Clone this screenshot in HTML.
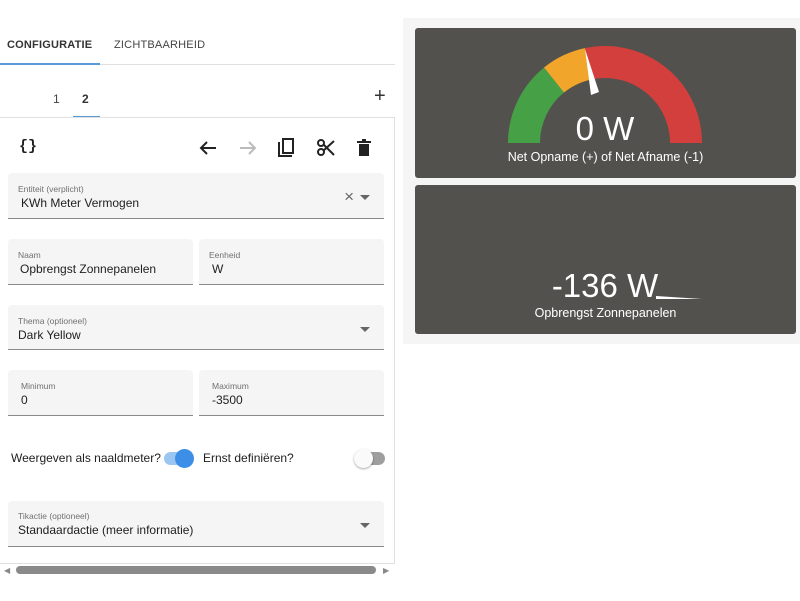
<!DOCTYPE html>
<html><head><meta charset="utf-8"><style>
*{box-sizing:border-box;margin:0;padding:0}
body{width:800px;height:601px;background:#fff;font-family:"Liberation Sans",Arial,sans-serif;position:relative;overflow:hidden;color:#212121}
.a{position:absolute}
.f{position:absolute;background:#f5f5f5;border-bottom:1px solid #8a8a8a;border-radius:4px 4px 0 0}
.f .l{position:absolute;left:10px;top:11px;font-size:8.5px;color:#707070}
.f .v{position:absolute;left:10px;top:23px;font-size:12px;color:#212121}
.dd{position:absolute;right:14px;top:22px;width:0;height:0;border-left:5px solid transparent;border-right:5px solid transparent;border-top:5px solid #666}
</style></head><body>
<div class="a" style="left:7px;top:39px;font-size:11px;font-weight:bold;letter-spacing:.2px;color:#333">CONFIGURATIE</div>
<div class="a" style="left:114px;top:39px;font-size:11px;letter-spacing:.2px;color:#444">ZICHTBAARHEID</div>
<div class="a" style="left:0;top:64px;width:395px;height:1px;background:#e0e0e0"></div>
<div class="a" style="left:0;top:63px;width:100px;height:2px;background:#5b9bd5"></div>
<div class="a" style="left:53px;top:92px;font-size:12px;color:#444">1</div>
<div class="a" style="left:82px;top:92px;font-size:12px;font-weight:bold;color:#333">2</div>
<div class="a" style="left:73px;top:116px;width:27px;height:2px;background:#5b9bd5"></div>
<div class="a" style="left:374px;top:85px;font-size:20px;color:#333">+</div>
<div class="a" style="left:0;top:117px;width:395px;height:1px;background:#e0e0e0"></div>
<div class="a" style="left:394px;top:117px;width:1px;height:447px;background:#e0e0e0"></div>
<div class="a" style="left:0;top:563px;width:395px;height:1px;background:#e0e0e0"></div>
<div class="a" style="left:19px;top:138px;font-size:15px;font-weight:bold;font-family:'Liberation Mono',monospace">{}</div>
<svg class="a" style="left:198px;top:138px" width="180" height="20" viewBox="0 0 180 20">
<path d="M18 10H3M9 4L3 10L9 16" stroke="#222" stroke-width="2" fill="none"/>
<path d="M42 10H57M51 4L57 10L51 16" stroke="#bbb" stroke-width="2" fill="none"/>
<path d="M81 4V18H94" stroke="#222" stroke-width="2" fill="none"/><rect x="85" y="1" width="10" height="14" stroke="#222" stroke-width="2" fill="none"/>
<circle cx="123" cy="14" r="3" stroke="#222" stroke-width="2" fill="none"/><circle cx="123" cy="5" r="3" stroke="#222" stroke-width="2" fill="none"/><path d="M125 13L136 3M125 6L136 17" stroke="#222" stroke-width="2"/>
<path d="M161 6h10v12h-10z" fill="#222"/><path d="M159 3h14v2h-14zM164 1h4v2h-4z" fill="#222"/>
</svg>
<div class="f" style="left:8px;top:173px;width:376px;height:46px"><div class="l">Entiteit (verplicht)</div><div class="v" style="left:13px">KWh Meter Vermogen</div><div class="a" style="right:30px;top:14px;font-size:17px;color:#666">×</div><div class="dd"></div></div>
<div class="f" style="left:8px;top:239px;width:185px;height:46px"><div class="l">Naam</div><div class="v" style="left:12px">Opbrengst Zonnepanelen</div></div>
<div class="f" style="left:199px;top:239px;width:185px;height:46px"><div class="l">Eenheid</div><div class="v" style="left:13px">W</div></div>
<div class="f" style="left:8px;top:305px;width:376px;height:45px"><div class="l">Thema (optioneel)</div><div class="v">Dark Yellow</div><div class="dd"></div></div>
<div class="f" style="left:8px;top:370px;width:185px;height:46px"><div class="l" style="left:13px">Minimum</div><div class="v" style="left:13px">0</div></div>
<div class="f" style="left:199px;top:370px;width:185px;height:46px"><div class="l" style="left:13px">Maximum</div><div class="v" style="left:13px">-3500</div></div>
<div class="a" style="left:11px;top:451px;font-size:12px">Weergeven als naaldmeter?</div>
<div class="a" style="left:164px;top:452px;width:28px;height:13px;border-radius:7px;background:#9cc6f2"></div>
<div class="a" style="left:175px;top:449px;width:19px;height:19px;border-radius:50%;background:#3d8ee6"></div>
<div class="a" style="left:203px;top:451px;font-size:12px">Ernst definiëren?</div>
<div class="a" style="left:357px;top:452px;width:28px;height:13px;border-radius:7px;background:#9e9e9e"></div>
<div class="a" style="left:354px;top:449px;width:19px;height:19px;border-radius:50%;background:#fafafa;box-shadow:0 1px 2px rgba(0,0,0,.35)"></div>
<div class="f" style="left:8px;top:501px;width:376px;height:46px"><div class="l" style="top:10px">Tikactie (optioneel)</div><div class="v" style="top:22px">Standaardactie (meer informatie)</div><div class="dd"></div></div>
<div class="a" style="left:4px;top:566px;font-size:8px;color:#888">◀</div>
<div class="a" style="left:16px;top:566px;width:360px;height:8px;border-radius:4px;background:#8a8a8a"></div>
<div class="a" style="left:383px;top:566px;font-size:8px;color:#888">▶</div>
<div class="a" style="left:403px;top:18px;width:397px;height:326px;background:#f5f5f5"></div>
<div class="a" style="left:415px;top:28px;width:381px;height:150px;background:#53514d;border-radius:3px"></div>
<div class="a" style="left:415px;top:185px;width:381px;height:149px;background:#53514d;border-radius:3px"></div>
<svg class="a" style="left:0;top:0" width="800" height="601">
<path d="M524 143A81 81 0 0 1 554 80" stroke="#46a046" stroke-width="32" fill="none"/>
<path d="M554 80A81 81 0 0 1 588.2 63.8" stroke="#f2a52b" stroke-width="32" fill="none"/>
<path d="M588.2 63.8A81 81 0 0 1 686 143" stroke="#d33f3c" stroke-width="32" fill="none"/>
<polygon points="585,49 591,95 599,92" fill="#fff"/>
<polygon points="656,296 702,299 656,299" fill="#fff"/>
</svg>
<div class="a" style="left:505px;top:110px;width:200px;text-align:center;font-size:33px;color:#fff">0 W</div>
<div class="a" style="left:415px;top:150px;width:381px;text-align:center;font-size:12.5px;color:#fff">Net Opname (+) of Net Afname (-1)</div>
<div class="a" style="left:505px;top:267px;width:200px;text-align:center;font-size:33px;color:#fff">-136 W</div>
<div class="a" style="left:415px;top:306px;width:381px;text-align:center;font-size:12.5px;color:#fff">Opbrengst Zonnepanelen</div>
</body></html>
